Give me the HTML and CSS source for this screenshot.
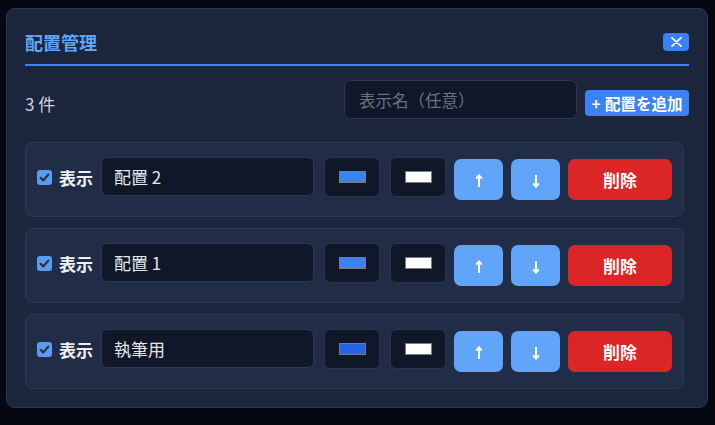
FILE: index.html
```html
<!DOCTYPE html>
<html lang="ja">
<head>
<meta charset="utf-8">
<title>配置管理</title>
<link rel="stylesheet" href="styles.css">
</head>
<body>
<div class="panel">
  <div class="header">
    <h2 class="title">配置管理</h2>
    <button class="close" aria-label="閉じる"><svg width="11" height="10" viewBox="0 0 11 10"><path d="M1 0.8 L10 9.2 M10 0.8 L1 9.2" stroke="#ffffff" stroke-width="1.6" stroke-linecap="round"/></svg></button>
  </div>
  <div class="toolbar">
    <span class="count">3 件</span>
    <input class="name-input new" type="text" placeholder="表示名（任意）">
    <button class="add">+ 配置を追加</button>
  </div>
  <div class="list">
    <div class="card">
      <label class="show"><svg class="cb" width="15" height="15" viewBox="0 0 15 15"><rect x="0" y="0" width="15" height="15" rx="3" fill="#5b9cf0"/><path d="M3.6 7.8 L6.2 10.4 L11.4 4.6" fill="none" stroke="#2b3240" stroke-width="2.2" stroke-linecap="round" stroke-linejoin="round"/></svg><span>表示</span></label>
      <div class="name-box">配置 2</div>
      <div class="color"><span class="sw" style="background:#3b82f6"></span></div>
      <div class="color"><span class="sw" style="background:#ffffff"></span></div>
      <button class="move" aria-label="上へ"><svg width="8" height="14" viewBox="0 0 8 14"><path d="M4 13 V1.5 M1.2 4.6 L4 1.3 L6.8 4.6" fill="none" stroke="#ffffff" stroke-width="1.9"/></svg></button>
      <button class="move" aria-label="下へ"><svg width="8" height="14" viewBox="0 0 8 14"><path d="M4 1 V12.5 M1.2 9.4 L4 12.7 L6.8 9.4" fill="none" stroke="#ffffff" stroke-width="1.9"/></svg></button>
      <button class="del">削除</button>
    </div>
    <div class="card">
      <label class="show"><svg class="cb" width="15" height="15" viewBox="0 0 15 15"><rect x="0" y="0" width="15" height="15" rx="3" fill="#5b9cf0"/><path d="M3.6 7.8 L6.2 10.4 L11.4 4.6" fill="none" stroke="#2b3240" stroke-width="2.2" stroke-linecap="round" stroke-linejoin="round"/></svg><span>表示</span></label>
      <div class="name-box">配置 1</div>
      <div class="color"><span class="sw" style="background:#3b82f6"></span></div>
      <div class="color"><span class="sw" style="background:#ffffff"></span></div>
      <button class="move" aria-label="上へ"><svg width="8" height="14" viewBox="0 0 8 14"><path d="M4 13 V1.5 M1.2 4.6 L4 1.3 L6.8 4.6" fill="none" stroke="#ffffff" stroke-width="1.9"/></svg></button>
      <button class="move" aria-label="下へ"><svg width="8" height="14" viewBox="0 0 8 14"><path d="M4 1 V12.5 M1.2 9.4 L4 12.7 L6.8 9.4" fill="none" stroke="#ffffff" stroke-width="1.9"/></svg></button>
      <button class="del">削除</button>
    </div>
    <div class="card">
      <label class="show"><svg class="cb" width="15" height="15" viewBox="0 0 15 15"><rect x="0" y="0" width="15" height="15" rx="3" fill="#5b9cf0"/><path d="M3.6 7.8 L6.2 10.4 L11.4 4.6" fill="none" stroke="#2b3240" stroke-width="2.2" stroke-linecap="round" stroke-linejoin="round"/></svg><span>表示</span></label>
      <div class="name-box">執筆用</div>
      <div class="color"><span class="sw" style="background:#2563eb"></span></div>
      <div class="color"><span class="sw" style="background:#ffffff"></span></div>
      <button class="move" aria-label="上へ"><svg width="8" height="14" viewBox="0 0 8 14"><path d="M4 13 V1.5 M1.2 4.6 L4 1.3 L6.8 4.6" fill="none" stroke="#ffffff" stroke-width="1.9"/></svg></button>
      <button class="move" aria-label="下へ"><svg width="8" height="14" viewBox="0 0 8 14"><path d="M4 1 V12.5 M1.2 9.4 L4 12.7 L6.8 9.4" fill="none" stroke="#ffffff" stroke-width="1.9"/></svg></button>
      <button class="del">削除</button>
    </div>
  </div>
</div>
</body>
</html>
```
FILE: styles.css
```css
* { box-sizing: border-box; }
html, body { margin: 0; padding: 0; }
body {
  background: #050810;
  font-family: "Noto Sans CJK JP", "Noto Sans", sans-serif;
  color: #e5e7eb;
  height: 425px;
  overflow: hidden;
}
.panel {
  width: 702px;
  margin: 8px 0 0 6px;
  background: #1b253b;
  border: 1px solid #2c3852;
  border-radius: 9px;
  padding: 21px 18px 18px 18px;
}
.header {
  display: flex;
  align-items: center;
  justify-content: space-between;
  height: 36px;
  padding-bottom: 10px;
  border-bottom: 2px solid #3b82f6;
}
.title {
  margin: 0;
  font-size: 18px;
  line-height: 24px;
  font-weight: 700;
  color: #60a5fa;
}
.close {
  width: 26px;
  height: 18px;
  padding: 0;
  border: none;
  border-radius: 4px;
  background: #3b82f6;
  display: flex;
  align-items: center;
  justify-content: center;
}
.close svg { display: block; }
.toolbar {
  display: flex;
  align-items: center;
  gap: 8px;
  margin-top: 14px;
  height: 46px;
}
.count {
  font-size: 17px;
  color: #cbd5e1;
  margin-right: auto;
}
.name-input {
  width: 233px;
  height: 39px;
  margin-bottom: 7px;
  background: #0f1729;
  border: 1px solid #2c3852;
  border-radius: 7px;
  padding: 0 14px;
  font-family: inherit;
  font-size: 16.5px;
  color: #e5e7eb;
  outline: none;
}
.name-input::placeholder { color: #6b7280; }
.add {
  width: 104px;
  height: 26px;
  padding: 0;
  border: none;
  border-radius: 4px;
  background: #3b82f6;
  color: #ffffff;
  font-family: inherit;
  font-size: 15.5px;
  font-weight: 700;
  line-height: 26px;
  white-space: nowrap;
  word-spacing: 1px;
}
.list {
  margin-top: 16px;
  padding-right: 5px;
  display: flex;
  flex-direction: column;
  gap: 11px;
}
.card {
  display: flex;
  align-items: flex-start;
  gap: 8px;
  background: #212d46;
  border: 1px solid #2d3a56;
  border-radius: 8px;
  padding: 14px 11px 16px 11px;
}
.show {
  align-self: center;
  display: flex;
  align-items: center;
  gap: 7px;
  font-size: 17px;
  font-weight: 700;
  color: #eef0f3;
  margin-right: 0;
  margin-bottom: 3px;
}
.cb { display: block; flex: none; }
.name-box {
  flex: 1;
  height: 39px;
  margin-right: 2px;
  background: #0f1729;
  border: 1px solid #2c3852;
  border-radius: 6px;
  padding: 0 12px;
  font-size: 17px;
  line-height: 37px;
  color: #e5e7eb;
}
.color {
  width: 56px;
  height: 40px;
  background: #0f1729;
  border: 1px solid #2a3550;
  border-radius: 6px;
  display: flex;
  align-items: center;
  justify-content: center;
}
.color + .color { margin-left: 2px; }
.sw {
  display: block;
  width: 27px;
  height: 12px;
  border: 1px solid #777b82;
}
.move {
  width: 49px;
  height: 41px;
  margin-top: 2px;
  padding: 3px 0 0 0;
  border: none;
  border-radius: 7px;
  background: #60a5fa;
  display: flex;
  align-items: center;
  justify-content: center;
}
.move svg { display: block; }
.del {
  width: 104px;
  height: 41px;
  margin-top: 2px;
  padding: 0;
  border: none;
  border-radius: 7px;
  background: #dc2626;
  color: #ffffff;
  font-family: inherit;
  font-size: 17px;
  font-weight: 700;
}
```
